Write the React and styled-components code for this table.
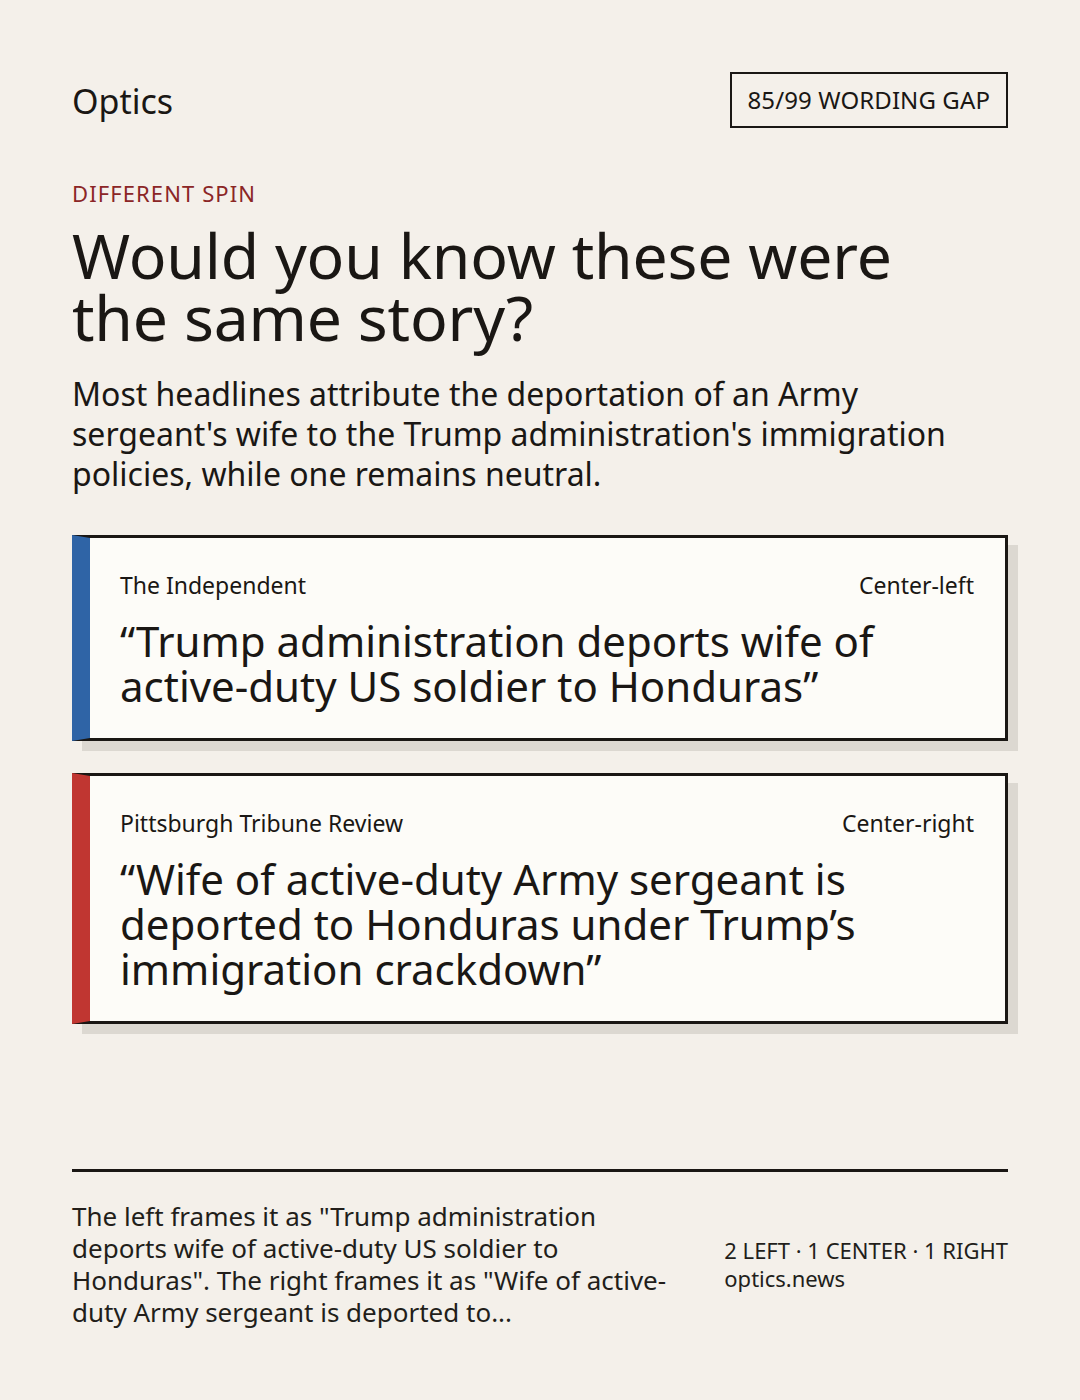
import React from "react";
import styled, { createGlobalStyle } from "styled-components";

const Global = createGlobalStyle`
  html, body { margin: 0; padding: 0; background: #f4f0ea; }
  body { font-family: "Noto Sans", "Open Sans", sans-serif; color: #1a1714; }
  * { box-sizing: border-box; }
`;

const Page = styled.div`
  min-height: 1400px;
  padding: 72px;
  display: flex;
  flex-direction: column;
`;

const Header = styled.header`
  display: flex;
  justify-content: space-between;
  align-items: center;
  margin-bottom: 50px;
`;

const Brand = styled.div`
  font-size: 34px;
  line-height: 46px;
  margin-top: 2px;
`;

const Badge = styled.div`
  border: 2px solid #1a1714;
  padding: 10px 16px;
  font-size: 24px;
  line-height: 32px;
  letter-spacing: 0.1px;
`;

const Kicker = styled.div`
  color: #8b2626;
  font-size: 22px;
  line-height: 30px;
  letter-spacing: 1.1px;
  margin-bottom: 16px;
`;

const Title = styled.h1`
  margin: 0 0 26px;
  font-weight: 400;
  font-size: 62.5px;
  line-height: 62px;
  letter-spacing: -0.2px;
`;

const Lede = styled.p`
  margin: 0 0 41px;
  font-size: 32px;
  line-height: 40px;
`;

const Cards = styled.div`
  display: flex;
  flex-direction: column;
  gap: 32px;
`;

const Card = styled.article`
  background: #fdfcf8;
  border: 3px solid #1a1714;
  border-left: 18px solid ${(p) => p.$accent};
  box-shadow: 10px 10px 0 #dcd8d1;
  padding: 32px 31px 30px 30px;
  display: flex;
  flex-direction: column;
  gap: 18px;
`;

const CardMeta = styled.div`
  display: flex;
  justify-content: space-between;
  font-size: 23px;
  line-height: 30px;
`;

const Quote = styled.h2`
  margin: 0;
  font-weight: 400;
  font-size: 42px;
  line-height: 45px;
`;

const Footer = styled.footer`
  margin-top: auto;
  border-top: 3px solid #1a1714;
  padding-top: 28px;
  display: flex;
  justify-content: space-between;
  align-items: center;
`;

const Summary = styled.p`
  margin: 0;
  max-width: 608px;
  font-size: 26px;
  line-height: 32px;
  color: #221e1a;
`;

const Meta = styled.div`
  font-size: 22px;
  line-height: 28px;
  color: #221e1a;
`;

const headlines = [
  {
    source: "The Independent",
    lean: "Center-left",
    accent: "#2f64a6",
    text: "\u201CTrump administration deports wife of active-duty US soldier to Honduras\u201D",
  },
  {
    source: "Pittsburgh Tribune Review",
    lean: "Center-right",
    accent: "#c03631",
    text: "\u201CWife of active-duty Army sergeant is deported to Honduras under Trump\u2019s immigration crackdown\u201D",
  },
];

export default function App() {
  return (
    <>
      <Global />
      <Page>
        <Header>
          <Brand>Optics</Brand>
          <Badge>85/99 WORDING GAP</Badge>
        </Header>
        <Kicker>DIFFERENT SPIN</Kicker>
        <Title>
          Would you know these were
          <br />
          the same story?
        </Title>
        <Lede>
          Most headlines attribute the deportation of an Army sergeant's wife to
          the Trump administration's immigration policies, while one remains
          neutral.
        </Lede>
        <Cards>
          {headlines.map((h) => (
            <Card key={h.source} $accent={h.accent}>
              <CardMeta>
                <span>{h.source}</span>
                <span>{h.lean}</span>
              </CardMeta>
              <Quote>{h.text}</Quote>
            </Card>
          ))}
        </Cards>
        <Footer>
          <Summary>
            The left frames it as "Trump administration deports wife of
            active-duty US soldier to Honduras". The right frames it as "Wife of
            active-duty Army sergeant is deported to...
          </Summary>
          <Meta>
            2 LEFT · 1 CENTER · 1 RIGHT
            <br />
            optics.news
          </Meta>
        </Footer>
      </Page>
    </>
  );
}
